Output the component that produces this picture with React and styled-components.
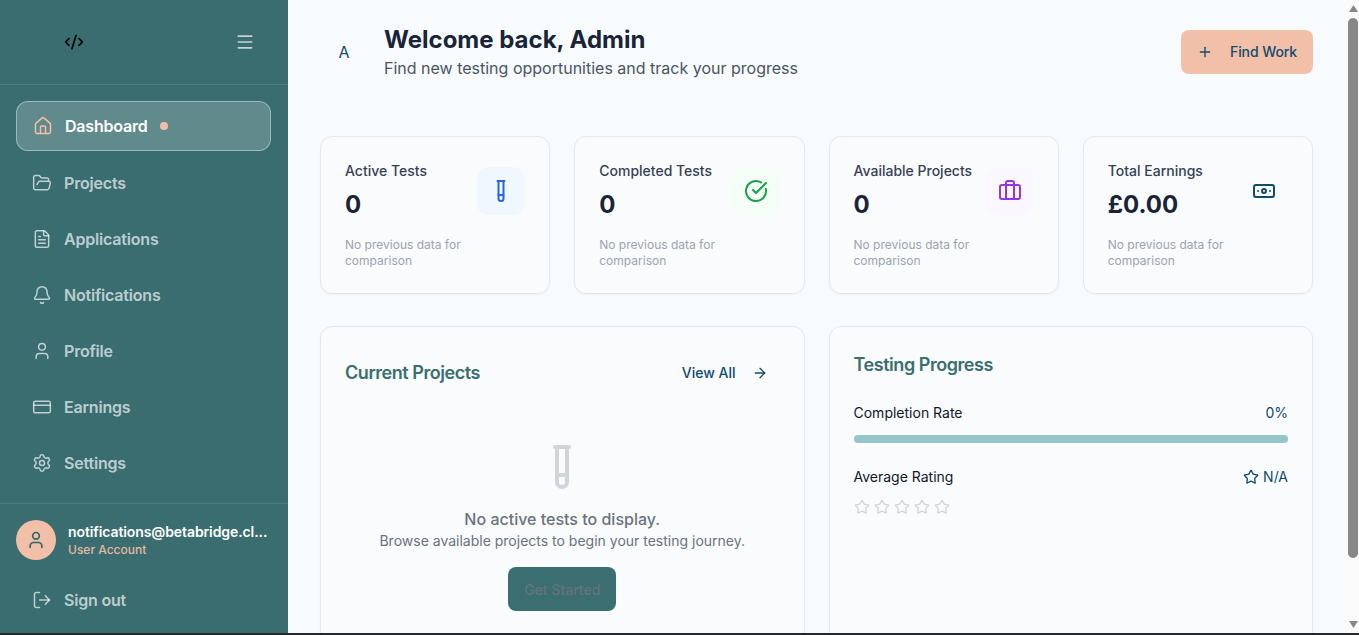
import React from "react";
import styled, { createGlobalStyle } from "styled-components";
import {
  House, FolderOpen, FileText, Bell, User, CreditCard, Settings, LogOut, Menu, CodeXml,
  Plus, ArrowRight, Star, TestTube, CircleCheckBig, Briefcase, Banknote,
} from "lucide-react";

const Global = createGlobalStyle`
  html, body { margin: 0; padding: 0; height: 100%; overflow: hidden; background: #f8fbfd; }
  body { font-family: Inter, "Liberation Sans", sans-serif; }
  * { box-sizing: border-box; }
`;

const Screen = styled.div`
  height: 635px;
  display: flex;
  flex-direction: column;
`;
const Page = styled.div`
  height: 633px;
  display: flex;
  overflow: hidden;
`;
const BottomEdge = styled.div`
  height: 2px;
  background: #26292b;
`;

const Sidebar = styled.aside`
  width: 288px;
  flex: none;
  display: flex;
  flex-direction: column;
  background: #396d6f;
`;
const SideHead = styled.div`
  height: 85px;
  flex: none;
  display: flex;
  align-items: center;
  justify-content: space-between;
  padding: 0 33px 1px 64px;
  border-bottom: 1px solid rgba(255, 255, 255, 0.12);
  color: #000;
`;
const MenuButton = styled.span`
  display: flex;
  color: rgba(255, 255, 255, 0.7);
`;
const Nav = styled.nav`
  flex: 1;
  display: flex;
  flex-direction: column;
  gap: 8px;
  padding: 16px 16px 16px;
`;
const NavItem = styled.div`
  display: flex;
  align-items: center;
  gap: 12px;
  height: 48px;
  padding-left: 16px;
  font-size: 16px;
  font-weight: 600;
  letter-spacing: -0.012em;
  color: rgba(255, 255, 255, 0.68);
`;
const ActiveItem = styled(NavItem)`
  height: 50px;
  width: 255px;
  padding-left: 16px;
  border: 1px solid rgba(255, 255, 255, 0.4);
  border-radius: 12px;
  background: rgba(255, 255, 255, 0.2);
  color: #fff;
  font-size: 16px;
  svg { color: #f2bfa9; }
`;
const ActiveDot = styled.span`
  width: 8px;
  height: 8px;
  margin-left: 0px;
  border-radius: 50%;
  background: #f2bfa9;
`;
const SideFoot = styled.div`
  flex: none;
  display: flex;
  flex-direction: column;
  gap: 16px;
  padding: 16px 16px 9px;
  border-top: 1px solid rgba(255, 255, 255, 0.12);
`;
const UserRow = styled.div`
  display: flex;
  align-items: center;
  gap: 12px;
`;
const UserAvatar = styled.div`
  width: 40px;
  height: 40px;
  flex: none;
  display: flex;
  align-items: center;
  justify-content: center;
  border-radius: 50%;
  background: #f2bfa9;
  color: #2f6668;
`;
const UserText = styled.div`
  min-width: 0;
`;
const UserMail = styled.div`
  font-size: 14px;
  line-height: 20px;
  font-weight: 600;
  letter-spacing: -0.007em;
  color: #fff;
  white-space: nowrap;
`;
const UserRole = styled.div`
  font-size: 12px;
  line-height: 16px;
  font-weight: 500;
  color: #e6b7a2;
`;

const Main = styled.main`
  flex: 1;
  min-width: 0;
  overflow: hidden;
  padding: 24px 34px 0 32px;
  background: #f8fbfd;
`;
const Header = styled.header`
  height: 56px;
  display: flex;
  align-items: center;
  justify-content: space-between;
  margin-bottom: 56px;
`;
const Greeting = styled.div`
  display: flex;
  align-items: center;
  gap: 16px;
`;
const Initial = styled.div`
  width: 48px;
  height: 48px;
  display: flex;
  align-items: center;
  justify-content: center;
  font-size: 16px;
  font-weight: 400;
  color: #0f4c6e;
`;
const Title = styled.h1`
  margin: 0;
  font-size: 24px;
  line-height: 32px;
  font-weight: 700;
  color: #1a2438;
`;
const Subtitle = styled.p`
  margin: 0;
  font-size: 16px;
  line-height: 24px;
  color: #4b5563;
`;
const FindWork = styled.button`
  width: 132px;
  height: 44px;
  display: flex;
  align-items: center;
  gap: 17px;
  padding: 0 0 1px 16px;
  border: 0;
  border-radius: 8px;
  background: #f2bfa9;
  color: #0f4c6e;
  font: 500 14px Inter, sans-serif;
  letter-spacing: -0.006em;
  white-space: nowrap;
  svg { flex: none; }
`;

const StatGrid = styled.section`
  display: grid;
  grid-template-columns: repeat(4, 1fr);
  gap: 24px;
  margin-bottom: 32px;
`;
const Card = styled.div`
  border: 1px solid #e5e7eb;
  border-radius: 12px;
  background: #f9fbfd;
  box-shadow: 0 1px 2px rgba(0, 0, 0, 0.04);
  padding: 24px;
`;
const StatTop = styled.div`
  display: flex;
  align-items: center;
  justify-content: space-between;
`;
const StatLabel = styled.div`
  font-size: 14px;
  line-height: 20px;
  font-weight: 500;
  color: #374151;
  white-space: nowrap;
`;
const StatValue = styled.div`
  margin-top: 8px;
  font-size: 24px;
  line-height: 32px;
  font-weight: 700;
  color: #1a2438;
`;
const StatIcon = styled.div`
  width: 48px;
  height: 48px;
  flex: none;
  display: flex;
  align-items: center;
  justify-content: center;
  border-radius: 12px;
  background: ${(p) => p.$bg};
  color: ${(p) => p.$fg};
`;
const StatNote = styled.p`
  margin: 16px 0 0;
  max-width: 150px;
  font-size: 12px;
  line-height: 16px;
  color: #9ca3af;
`;

const PanelGrid = styled.section`
  display: grid;
  grid-template-columns: 1fr 1fr;
  gap: 24px;
`;
const Panel = styled(Card)`
  height: 420px;
`;
const PanelHead = styled.div`
  height: 44px;
  display: flex;
  align-items: center;
  justify-content: space-between;
`;
const PanelTitle = styled.h2`
  margin: 0;
  font-size: 18px;
  line-height: 28px;
  font-weight: 600;
  letter-spacing: -0.025em;
  color: #3a6e70;
`;
const ViewAll = styled.a`
  display: flex;
  align-items: center;
  gap: 16px;
  padding: 0 12px 1px 0;
  font-size: 14px;
  font-weight: 500;
  color: #0f4c6e;
`;
const Empty = styled.div`
  display: flex;
  flex-direction: column;
  align-items: center;
  padding-top: 48px;
  color: #d1d5db;
`;
const EmptyTitle = styled.div`
  margin-top: 16px;
  font-size: 16px;
  line-height: 24px;
  font-weight: 500;
  color: #6b7280;
`;
const EmptyText = styled.div`
  font-size: 14px;
  line-height: 20px;
  color: #6b7280;
`;
const GetStarted = styled.button`
  margin-top: 16px;
  width: 108px;
  height: 44px;
  padding-bottom: 1px;
  border: 0;
  border-radius: 8px;
  background: #3a6e70;
  color: #66747a;
  font: 500 14px Inter, sans-serif;
`;
const MetricRow = styled.div`
  display: flex;
  align-items: center;
  justify-content: space-between;
  margin-top: 24px;
  font-size: 14px;
  line-height: 20px;
  color: #111827;
`;
const MetricValue = styled.span`
  display: flex;
  align-items: center;
  gap: 4px;
  color: #0f4c6e;
`;
const Bar = styled.div`
  height: 8px;
  margin-top: 12px;
  border-radius: 4px;
  background: #94c5c9;
`;
const Stars = styled.div`
  display: flex;
  gap: 4px;
  margin-top: 12px;
  color: #d1d5db;
`;

const Rail = styled.div`
  width: 12px;
  flex: none;
  display: flex;
  flex-direction: column;
  align-items: center;
  padding: 5px 1px;
  background: #fafafa;
`;
const RailThumb = styled.div`
  width: 10px;
  height: 540px;
  margin-top: 6px;
  border-radius: 5px;
  background: #878787;
`;
const RailSpace = styled.div`
  flex: 1;
`;
const RailArrow = styled.svg`
  display: block;
  fill: #878787;
`;

const links = [
  [FolderOpen, "Projects"],
  [FileText, "Applications"],
  [Bell, "Notifications"],
  [User, "Profile"],
  [CreditCard, "Earnings"],
  [Settings, "Settings"],
];

const stats = [
  ["Active Tests", "0", TestTube, "#f1f7ff", "#2563eb"],
  ["Completed Tests", "0", CircleCheckBig, "#f4fdf6", "#16a34a"],
  ["Available Projects", "0", Briefcase, "#fbf7ff", "#9333ea"],
  ["Total Earnings", "£0.00", Banknote, "transparent", "#0f4c6e"],
];

export default function App() {
  return (
    <Screen>
      <Global />
      <Page>
        <Sidebar>
          <SideHead>
            <CodeXml size={20} />
            <MenuButton><Menu size={20} /></MenuButton>
          </SideHead>
          <Nav>
            <ActiveItem>
              <House size={20} strokeWidth={1.8} />
              <span>Dashboard</span>
              <ActiveDot />
            </ActiveItem>
            {links.map(([Icon, label]) => (
              <NavItem key={label}>
                <Icon size={20} strokeWidth={1.8} />
                <span>{label}</span>
              </NavItem>
            ))}
          </Nav>
          <SideFoot>
            <UserRow>
              <UserAvatar><User size={20} /></UserAvatar>
              <UserText>
                <UserMail>notifications@betabridge.cl...</UserMail>
                <UserRole>User Account</UserRole>
              </UserText>
            </UserRow>
            <NavItem>
              <LogOut size={20} strokeWidth={1.8} />
              <span>Sign out</span>
            </NavItem>
          </SideFoot>
        </Sidebar>
        <Main>
          <Header>
            <Greeting>
              <Initial>A</Initial>
              <div>
                <Title>Welcome back, Admin</Title>
                <Subtitle>Find new testing opportunities and track your progress</Subtitle>
              </div>
            </Greeting>
            <FindWork><Plus size={16} /> Find Work</FindWork>
          </Header>
          <StatGrid>
            {stats.map(([label, value, Icon, bg, fg]) => (
              <Card key={label}>
                <StatTop>
                  <div>
                    <StatLabel>{label}</StatLabel>
                    <StatValue>{value}</StatValue>
                  </div>
                  <StatIcon $bg={bg} $fg={fg}><Icon size={24} /></StatIcon>
                </StatTop>
                <StatNote>No previous data for comparison</StatNote>
              </Card>
            ))}
          </StatGrid>
          <PanelGrid>
            <Panel>
              <PanelHead>
                <PanelTitle>Current Projects</PanelTitle>
                <ViewAll>View All <ArrowRight size={16} /></ViewAll>
              </PanelHead>
              <Empty>
                <TestTube size={48} />
                <EmptyTitle>No active tests to display.</EmptyTitle>
                <EmptyText>Browse available projects to begin your testing journey.</EmptyText>
                <GetStarted>Get Started</GetStarted>
              </Empty>
            </Panel>
            <Panel>
              <PanelTitle>Testing Progress</PanelTitle>
              <MetricRow>
                <span>Completion Rate</span>
                <MetricValue>0%</MetricValue>
              </MetricRow>
              <Bar />
              <MetricRow>
                <span>Average Rating</span>
                <MetricValue><Star size={16} /> N/A</MetricValue>
              </MetricRow>
              <Stars>
                {[0, 1, 2, 3, 4].map((i) => <Star key={i} size={16} />)}
              </Stars>
            </Panel>
          </PanelGrid>
        </Main>
        <Rail>
          <RailArrow width="9" height="7" viewBox="0 0 9 7"><path d="M4.5 0 9 7H0z" /></RailArrow>
          <RailThumb />
          <RailSpace />
          <RailArrow width="9" height="7" viewBox="0 0 9 7"><path d="M0 0h9L4.5 7z" /></RailArrow>
        </Rail>
      </Page>
      <BottomEdge />
    </Screen>
  );
}
